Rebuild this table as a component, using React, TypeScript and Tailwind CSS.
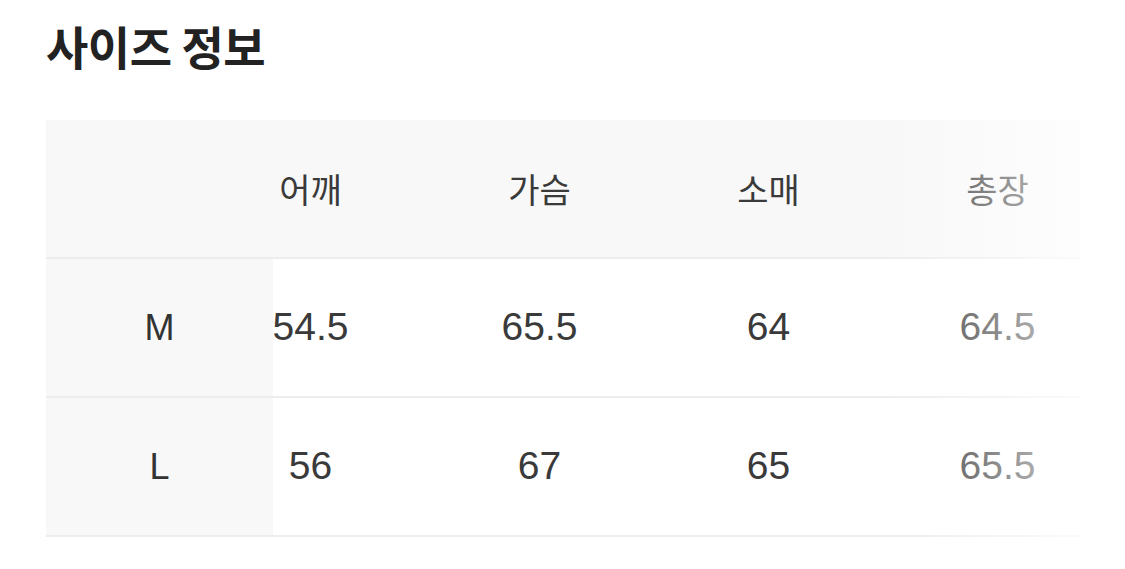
const columns = ["어깨", "가슴", "소매", "총장"];

const rows = [
  { size: "M", values: ["54.5", "65.5", "64", "64.5"] },
  { size: "L", values: ["56", "67", "65", "65.5"] },
];

const krFont = "font-['Noto_Sans_CJK_KR','Noto_Sans',sans-serif]";
const numFont = "font-['Liberation_Sans','Arial',sans-serif]";

export default function App() {
  return (
    <div className="min-h-[569px] w-[1125px] bg-white pl-[46px] pt-[12px] text-[#333]">
      <h1 className={`${krFont} text-[46px] font-bold leading-[66px] tracking-[-0.5px] text-[#222]`}>
        사이즈 정보
      </h1>

      <div className="relative mt-[42px] w-[1034px] overflow-hidden">
        {/* header */}
        <div className="flex h-[139px] border-b-2 border-[#ededed] bg-[#f8f8f8]">
          <div className="relative z-10 w-[227px] shrink-0 bg-[#f8f8f8]" />
          {columns.map((col, i) => (
            <div
              key={col}
              className={`${krFont} flex w-[229px] shrink-0 items-center justify-center text-[34px] font-normal text-[#3a3a3a] ${i === 0 ? "-ml-[77px]" : ""}`}
            >
              {col}
            </div>
          ))}
        </div>

        {rows.map((row) => (
          <div key={row.size} className="flex h-[139px] border-b-2 border-[#ededed]">
            <div
              className={`${numFont} relative z-10 flex w-[227px] shrink-0 items-center justify-center bg-[#f8f8f8] text-[36px] text-[#333]`}
            >
              {row.size}
            </div>
            {row.values.map((v, i) => (
              <div
                key={i}
                className={`${numFont} flex w-[229px] shrink-0 items-center justify-center text-[39px] text-[#3a3a3a] ${i === 0 ? "-ml-[77px]" : ""}`}
              >
                {v}
              </div>
            ))}
          </div>
        ))}

        {/* scroll fade */}
        <div className="pointer-events-none absolute inset-y-0 right-0 z-20 w-[200px] bg-gradient-to-r from-white/0 via-white/35 to-white/75" />
      </div>
    </div>
  );
}
